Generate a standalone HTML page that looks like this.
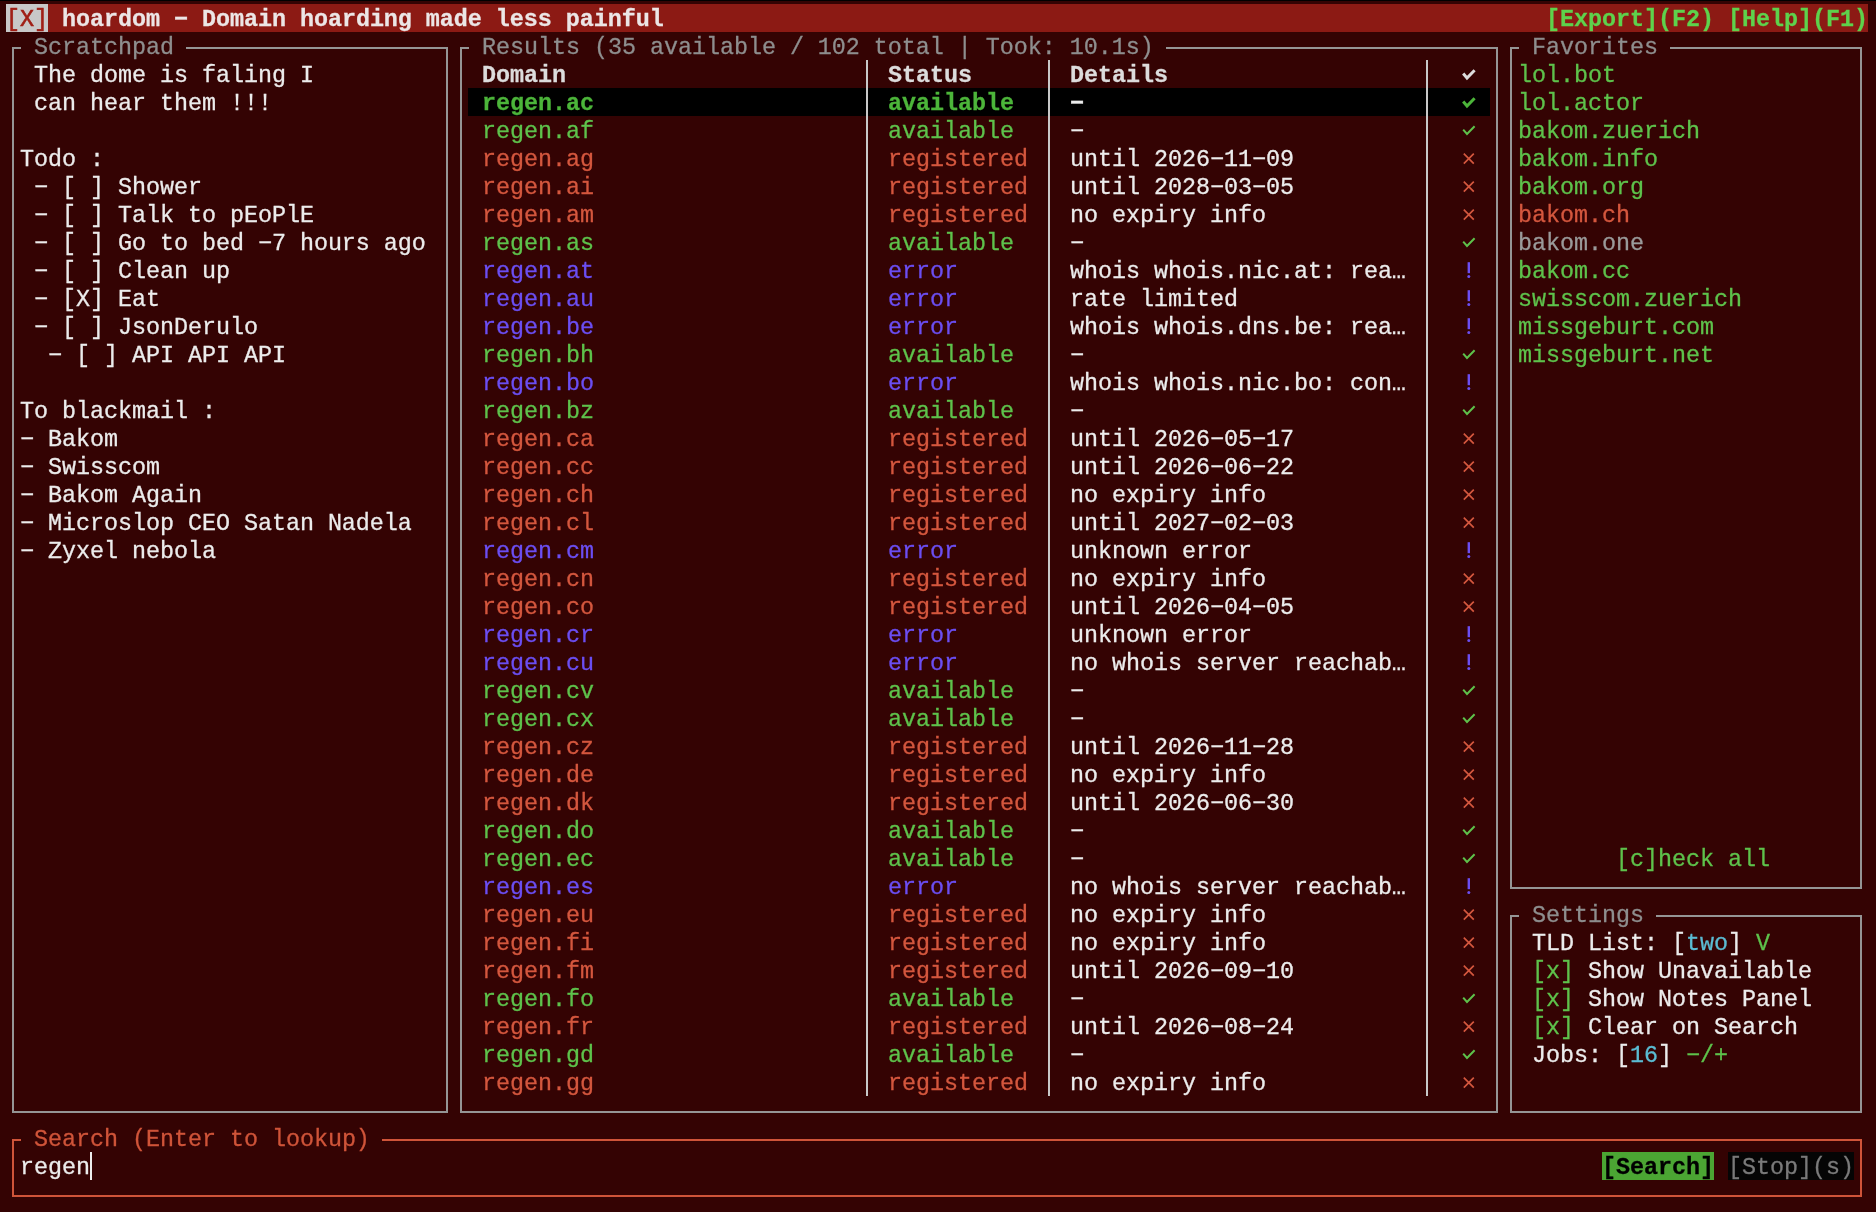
<!DOCTYPE html><html><head><meta charset="utf-8"><style>
html,body{margin:0;padding:0;}
body{width:1876px;height:1212px;overflow:hidden;background:#340303;position:relative;font-family:"Liberation Mono",monospace;}
.r{position:absolute;}
.t{position:absolute;white-space:pre;-webkit-text-stroke:0.28px currentColor;font-size:23.4px;line-height:28px;letter-spacing:-0.0423px;}
.b{font-weight:bold;}
.xs{-webkit-text-stroke:0.6px currentColor;}
svg{position:absolute;left:0;top:0;}
#tx{position:absolute;left:0;top:0;width:1876px;height:1212px;will-change:transform;}

</style></head><body>
<div class="r" style="left:0;top:0;width:1876px;height:1px;background:#000"></div>
<div class="r" style="left:6px;top:4px;width:1862px;height:28px;background:#8c1a14"></div>
<div class="r" style="left:6px;top:4px;width:42px;height:28px;background:#c8c8c8"></div>
<div class="r" style="left:12px;top:47px;width:2px;height:1066px;background:#959595"></div>
<div class="r" style="left:446px;top:47px;width:2px;height:1066px;background:#959595"></div>
<div class="r" style="left:12px;top:1111px;width:436px;height:2px;background:#959595"></div>
<div class="r" style="left:12px;top:47px;width:9px;height:2px;background:#959595"></div>
<div class="r" style="left:186px;top:47px;width:262px;height:2px;background:#959595"></div>
<div class="r" style="left:460px;top:47px;width:2px;height:1066px;background:#959595"></div>
<div class="r" style="left:1496px;top:47px;width:2px;height:1066px;background:#959595"></div>
<div class="r" style="left:460px;top:1111px;width:1038px;height:2px;background:#959595"></div>
<div class="r" style="left:460px;top:47px;width:9px;height:2px;background:#959595"></div>
<div class="r" style="left:1166px;top:47px;width:332px;height:2px;background:#959595"></div>
<div class="r" style="left:1510px;top:47px;width:2px;height:842px;background:#959595"></div>
<div class="r" style="left:1860px;top:47px;width:2px;height:842px;background:#959595"></div>
<div class="r" style="left:1510px;top:887px;width:352px;height:2px;background:#959595"></div>
<div class="r" style="left:1510px;top:47px;width:9px;height:2px;background:#959595"></div>
<div class="r" style="left:1670px;top:47px;width:192px;height:2px;background:#959595"></div>
<div class="r" style="left:1510px;top:915px;width:2px;height:198px;background:#959595"></div>
<div class="r" style="left:1860px;top:915px;width:2px;height:198px;background:#959595"></div>
<div class="r" style="left:1510px;top:1111px;width:352px;height:2px;background:#959595"></div>
<div class="r" style="left:1510px;top:915px;width:9px;height:2px;background:#959595"></div>
<div class="r" style="left:1656px;top:915px;width:206px;height:2px;background:#959595"></div>
<div class="r" style="left:12px;top:1139px;width:2px;height:58px;background:#cf5439"></div>
<div class="r" style="left:1860px;top:1139px;width:2px;height:58px;background:#cf5439"></div>
<div class="r" style="left:12px;top:1195px;width:1850px;height:2px;background:#cf5439"></div>
<div class="r" style="left:12px;top:1139px;width:9px;height:2px;background:#cf5439"></div>
<div class="r" style="left:382px;top:1139px;width:1480px;height:2px;background:#cf5439"></div>
<div class="r" style="left:468px;top:88px;width:1022px;height:28px;background:#000000"></div>
<div class="r" style="left:866px;top:60px;width:2px;height:1036px;background:#c8c8c8"></div>
<div class="r" style="left:1048px;top:60px;width:2px;height:1036px;background:#c8c8c8"></div>
<div class="r" style="left:1426px;top:60px;width:2px;height:1036px;background:#c8c8c8"></div>
<div class="r" style="left:90px;top:1152px;width:2px;height:28px;background:#ececec"></div>
<div class="r" style="left:1602px;top:1152px;width:112px;height:28px;background:#4ba533"></div>
<div class="r" style="left:1728px;top:1152px;width:126px;height:28px;background:#050505"></div>
<div id="tx">
<div class="r" style="left:6px;top:4px;height:28px;width:46px;overflow:hidden"><div class="t xs" style="left:0;top:1.50px;color:#a01f16">[X]</div></div>
<div class="r" style="left:62px;top:4px;height:28px;width:606px;overflow:hidden"><div class="t b" style="left:0;top:1.50px;color:#ece6e6">hoardom − Domain hoarding made less painful</div></div>
<div class="r" style="left:1546px;top:4px;height:28px;width:326px;overflow:hidden"><div class="t b" style="left:0;top:1.50px;color:#5ed24c">[Export](F2) [Help](F1)</div></div>
<div class="t" style="left:34px;top:33.50px;color:#8e8e8e">Scratchpad</div>
<div class="t" style="left:482px;top:33.50px;color:#8e8e8e">Results (35 available / 102 total | Took: 10.1s)</div>
<div class="t" style="left:1532px;top:33.50px;color:#8e8e8e">Favorites</div>
<div class="t" style="left:1532px;top:901.50px;color:#8e8e8e">Settings</div>
<div class="t" style="left:34px;top:1125.50px;color:#cf5439">Search (Enter to lookup)</div>
<div class="t" style="left:20px;top:61.50px;color:#ececec"> The dome is faling I</div>
<div class="t" style="left:20px;top:89.50px;color:#ececec"> can hear them !!!</div>
<div class="t" style="left:20px;top:145.50px;color:#ececec">Todo :</div>
<div class="t" style="left:20px;top:173.50px;color:#ececec"> − [ ] Shower</div>
<div class="t" style="left:20px;top:201.50px;color:#ececec"> − [ ] Talk to pEoPlE</div>
<div class="t" style="left:20px;top:229.50px;color:#ececec"> − [ ] Go to bed −7 hours ago</div>
<div class="t" style="left:20px;top:257.50px;color:#ececec"> − [ ] Clean up</div>
<div class="t" style="left:20px;top:285.50px;color:#ececec"> − [X] Eat</div>
<div class="t" style="left:20px;top:313.50px;color:#ececec"> − [ ] JsonDerulo</div>
<div class="t" style="left:20px;top:341.50px;color:#ececec">  − [ ] API API API</div>
<div class="t" style="left:20px;top:397.50px;color:#ececec">To blackmail :</div>
<div class="t" style="left:20px;top:425.50px;color:#ececec">− Bakom</div>
<div class="t" style="left:20px;top:453.50px;color:#ececec">− Swisscom</div>
<div class="t" style="left:20px;top:481.50px;color:#ececec">− Bakom Again</div>
<div class="t" style="left:20px;top:509.50px;color:#ececec">− Microslop CEO Satan Nadela</div>
<div class="t" style="left:20px;top:537.50px;color:#ececec">− Zyxel nebola</div>
<div class="t b" style="left:482px;top:61.50px;color:#dcdcdc">Domain</div>
<div class="t b" style="left:888px;top:61.50px;color:#dcdcdc">Status</div>
<div class="t b" style="left:1070px;top:61.50px;color:#dcdcdc">Details</div>
<div class="t b" style="left:482px;top:89.50px;color:#4cb53a">regen.ac</div>
<div class="t b" style="left:888px;top:89.50px;color:#4cb53a">available</div>
<div class="t b" style="left:1070px;top:89.50px;color:#ececec">−</div>
<div class="t" style="left:482px;top:117.50px;color:#5ec24b">regen.af</div>
<div class="t" style="left:888px;top:117.50px;color:#5ec24b">available</div>
<div class="t" style="left:1070px;top:117.50px;color:#ececec">−</div>
<div class="t" style="left:482px;top:145.50px;color:#d4573e">regen.ag</div>
<div class="t" style="left:888px;top:145.50px;color:#d4573e">registered</div>
<div class="t" style="left:1070px;top:145.50px;color:#ececec">until 2026−11−09</div>
<div class="t" style="left:482px;top:173.50px;color:#d4573e">regen.ai</div>
<div class="t" style="left:888px;top:173.50px;color:#d4573e">registered</div>
<div class="t" style="left:1070px;top:173.50px;color:#ececec">until 2028−03−05</div>
<div class="t" style="left:482px;top:201.50px;color:#d4573e">regen.am</div>
<div class="t" style="left:888px;top:201.50px;color:#d4573e">registered</div>
<div class="t" style="left:1070px;top:201.50px;color:#ececec">no expiry info</div>
<div class="t" style="left:482px;top:229.50px;color:#5ec24b">regen.as</div>
<div class="t" style="left:888px;top:229.50px;color:#5ec24b">available</div>
<div class="t" style="left:1070px;top:229.50px;color:#ececec">−</div>
<div class="t" style="left:482px;top:257.50px;color:#6b4ef2">regen.at</div>
<div class="t" style="left:888px;top:257.50px;color:#6b4ef2">error</div>
<div class="t" style="left:1070px;top:257.50px;color:#ececec">whois whois.nic.at: rea…</div>
<div class="t" style="left:482px;top:285.50px;color:#6b4ef2">regen.au</div>
<div class="t" style="left:888px;top:285.50px;color:#6b4ef2">error</div>
<div class="t" style="left:1070px;top:285.50px;color:#ececec">rate limited</div>
<div class="t" style="left:482px;top:313.50px;color:#6b4ef2">regen.be</div>
<div class="t" style="left:888px;top:313.50px;color:#6b4ef2">error</div>
<div class="t" style="left:1070px;top:313.50px;color:#ececec">whois whois.dns.be: rea…</div>
<div class="t" style="left:482px;top:341.50px;color:#5ec24b">regen.bh</div>
<div class="t" style="left:888px;top:341.50px;color:#5ec24b">available</div>
<div class="t" style="left:1070px;top:341.50px;color:#ececec">−</div>
<div class="t" style="left:482px;top:369.50px;color:#6b4ef2">regen.bo</div>
<div class="t" style="left:888px;top:369.50px;color:#6b4ef2">error</div>
<div class="t" style="left:1070px;top:369.50px;color:#ececec">whois whois.nic.bo: con…</div>
<div class="t" style="left:482px;top:397.50px;color:#5ec24b">regen.bz</div>
<div class="t" style="left:888px;top:397.50px;color:#5ec24b">available</div>
<div class="t" style="left:1070px;top:397.50px;color:#ececec">−</div>
<div class="t" style="left:482px;top:425.50px;color:#d4573e">regen.ca</div>
<div class="t" style="left:888px;top:425.50px;color:#d4573e">registered</div>
<div class="t" style="left:1070px;top:425.50px;color:#ececec">until 2026−05−17</div>
<div class="t" style="left:482px;top:453.50px;color:#d4573e">regen.cc</div>
<div class="t" style="left:888px;top:453.50px;color:#d4573e">registered</div>
<div class="t" style="left:1070px;top:453.50px;color:#ececec">until 2026−06−22</div>
<div class="t" style="left:482px;top:481.50px;color:#d4573e">regen.ch</div>
<div class="t" style="left:888px;top:481.50px;color:#d4573e">registered</div>
<div class="t" style="left:1070px;top:481.50px;color:#ececec">no expiry info</div>
<div class="t" style="left:482px;top:509.50px;color:#d4573e">regen.cl</div>
<div class="t" style="left:888px;top:509.50px;color:#d4573e">registered</div>
<div class="t" style="left:1070px;top:509.50px;color:#ececec">until 2027−02−03</div>
<div class="t" style="left:482px;top:537.50px;color:#6b4ef2">regen.cm</div>
<div class="t" style="left:888px;top:537.50px;color:#6b4ef2">error</div>
<div class="t" style="left:1070px;top:537.50px;color:#ececec">unknown error</div>
<div class="t" style="left:482px;top:565.50px;color:#d4573e">regen.cn</div>
<div class="t" style="left:888px;top:565.50px;color:#d4573e">registered</div>
<div class="t" style="left:1070px;top:565.50px;color:#ececec">no expiry info</div>
<div class="t" style="left:482px;top:593.50px;color:#d4573e">regen.co</div>
<div class="t" style="left:888px;top:593.50px;color:#d4573e">registered</div>
<div class="t" style="left:1070px;top:593.50px;color:#ececec">until 2026−04−05</div>
<div class="t" style="left:482px;top:621.50px;color:#6b4ef2">regen.cr</div>
<div class="t" style="left:888px;top:621.50px;color:#6b4ef2">error</div>
<div class="t" style="left:1070px;top:621.50px;color:#ececec">unknown error</div>
<div class="t" style="left:482px;top:649.50px;color:#6b4ef2">regen.cu</div>
<div class="t" style="left:888px;top:649.50px;color:#6b4ef2">error</div>
<div class="t" style="left:1070px;top:649.50px;color:#ececec">no whois server reachab…</div>
<div class="t" style="left:482px;top:677.50px;color:#5ec24b">regen.cv</div>
<div class="t" style="left:888px;top:677.50px;color:#5ec24b">available</div>
<div class="t" style="left:1070px;top:677.50px;color:#ececec">−</div>
<div class="t" style="left:482px;top:705.50px;color:#5ec24b">regen.cx</div>
<div class="t" style="left:888px;top:705.50px;color:#5ec24b">available</div>
<div class="t" style="left:1070px;top:705.50px;color:#ececec">−</div>
<div class="t" style="left:482px;top:733.50px;color:#d4573e">regen.cz</div>
<div class="t" style="left:888px;top:733.50px;color:#d4573e">registered</div>
<div class="t" style="left:1070px;top:733.50px;color:#ececec">until 2026−11−28</div>
<div class="t" style="left:482px;top:761.50px;color:#d4573e">regen.de</div>
<div class="t" style="left:888px;top:761.50px;color:#d4573e">registered</div>
<div class="t" style="left:1070px;top:761.50px;color:#ececec">no expiry info</div>
<div class="t" style="left:482px;top:789.50px;color:#d4573e">regen.dk</div>
<div class="t" style="left:888px;top:789.50px;color:#d4573e">registered</div>
<div class="t" style="left:1070px;top:789.50px;color:#ececec">until 2026−06−30</div>
<div class="t" style="left:482px;top:817.50px;color:#5ec24b">regen.do</div>
<div class="t" style="left:888px;top:817.50px;color:#5ec24b">available</div>
<div class="t" style="left:1070px;top:817.50px;color:#ececec">−</div>
<div class="t" style="left:482px;top:845.50px;color:#5ec24b">regen.ec</div>
<div class="t" style="left:888px;top:845.50px;color:#5ec24b">available</div>
<div class="t" style="left:1070px;top:845.50px;color:#ececec">−</div>
<div class="t" style="left:482px;top:873.50px;color:#6b4ef2">regen.es</div>
<div class="t" style="left:888px;top:873.50px;color:#6b4ef2">error</div>
<div class="t" style="left:1070px;top:873.50px;color:#ececec">no whois server reachab…</div>
<div class="t" style="left:482px;top:901.50px;color:#d4573e">regen.eu</div>
<div class="t" style="left:888px;top:901.50px;color:#d4573e">registered</div>
<div class="t" style="left:1070px;top:901.50px;color:#ececec">no expiry info</div>
<div class="t" style="left:482px;top:929.50px;color:#d4573e">regen.fi</div>
<div class="t" style="left:888px;top:929.50px;color:#d4573e">registered</div>
<div class="t" style="left:1070px;top:929.50px;color:#ececec">no expiry info</div>
<div class="t" style="left:482px;top:957.50px;color:#d4573e">regen.fm</div>
<div class="t" style="left:888px;top:957.50px;color:#d4573e">registered</div>
<div class="t" style="left:1070px;top:957.50px;color:#ececec">until 2026−09−10</div>
<div class="t" style="left:482px;top:985.50px;color:#5ec24b">regen.fo</div>
<div class="t" style="left:888px;top:985.50px;color:#5ec24b">available</div>
<div class="t" style="left:1070px;top:985.50px;color:#ececec">−</div>
<div class="t" style="left:482px;top:1013.50px;color:#d4573e">regen.fr</div>
<div class="t" style="left:888px;top:1013.50px;color:#d4573e">registered</div>
<div class="t" style="left:1070px;top:1013.50px;color:#ececec">until 2026−08−24</div>
<div class="t" style="left:482px;top:1041.50px;color:#5ec24b">regen.gd</div>
<div class="t" style="left:888px;top:1041.50px;color:#5ec24b">available</div>
<div class="t" style="left:1070px;top:1041.50px;color:#ececec">−</div>
<div class="t" style="left:482px;top:1069.50px;color:#d4573e">regen.gg</div>
<div class="t" style="left:888px;top:1069.50px;color:#d4573e">registered</div>
<div class="t" style="left:1070px;top:1069.50px;color:#ececec">no expiry info</div>
<div class="t" style="left:1518px;top:61.50px;color:#5ec24b">lol.bot</div>
<div class="t" style="left:1518px;top:89.50px;color:#5ec24b">lol.actor</div>
<div class="t" style="left:1518px;top:117.50px;color:#5ec24b">bakom.zuerich</div>
<div class="t" style="left:1518px;top:145.50px;color:#5ec24b">bakom.info</div>
<div class="t" style="left:1518px;top:173.50px;color:#5ec24b">bakom.org</div>
<div class="t" style="left:1518px;top:201.50px;color:#d4573e">bakom.ch</div>
<div class="t" style="left:1518px;top:229.50px;color:#9a9a9a">bakom.one</div>
<div class="t" style="left:1518px;top:257.50px;color:#5ec24b">bakom.cc</div>
<div class="t" style="left:1518px;top:285.50px;color:#5ec24b">swisscom.zuerich</div>
<div class="t" style="left:1518px;top:313.50px;color:#5ec24b">missgeburt.com</div>
<div class="t" style="left:1518px;top:341.50px;color:#5ec24b">missgeburt.net</div>
<div class="t" style="left:1616px;top:845.50px;color:#5ec24b">[c]heck all</div>
<div class="t" style="left:1532px;top:929.50px;color:#ececec">TLD List: [</div>
<div class="t" style="left:1686px;top:929.50px;color:#5bbcd3">two</div>
<div class="t" style="left:1728px;top:929.50px;color:#ececec">]</div>
<div class="t" style="left:1756px;top:929.50px;color:#5ec24b">V</div>
<div class="t" style="left:1532px;top:957.50px;color:#5ec24b">[x]</div>
<div class="t" style="left:1588px;top:957.50px;color:#ececec">Show Unavailable</div>
<div class="t" style="left:1532px;top:985.50px;color:#5ec24b">[x]</div>
<div class="t" style="left:1588px;top:985.50px;color:#ececec">Show Notes Panel</div>
<div class="t" style="left:1532px;top:1013.50px;color:#5ec24b">[x]</div>
<div class="t" style="left:1588px;top:1013.50px;color:#ececec">Clear on Search</div>
<div class="t" style="left:1532px;top:1041.50px;color:#ececec">Jobs: [</div>
<div class="t" style="left:1630px;top:1041.50px;color:#5bbcd3">16</div>
<div class="t" style="left:1658px;top:1041.50px;color:#ececec">]</div>
<div class="t" style="left:1686px;top:1041.50px;color:#5ec24b">−/+</div>
<div class="t" style="left:20px;top:1153.50px;color:#ececec">regen</div>
<div class="t b" style="left:1602px;top:1153.50px;color:#000000">[Search]</div>
<div class="t" style="left:1728px;top:1153.50px;color:#7a7a7a">[Stop](s)</div>
<svg width="1876" height="1212" viewBox="0 0 1876 1212"><path d="M1463.2 73.6 L1467 78 L1474.6 70.2" fill="none" stroke="#dcdcdc" stroke-width="3" stroke-linecap="butt" stroke-linejoin="miter"/><path d="M1463.2 101.6 L1467 106 L1474.6 98.2" fill="none" stroke="#4cb53a" stroke-width="3" stroke-linecap="butt" stroke-linejoin="miter"/><path d="M1463.2 129.6 L1467 134 L1474.6 126.2" fill="none" stroke="#5ec24b" stroke-width="2" stroke-linecap="butt" stroke-linejoin="miter"/><path d="M1463.8 153.6 L1473.8 163.6 M1473.8 153.6 L1463.8 163.6" fill="none" stroke="#d4573e" stroke-width="1.7"/><path d="M1463.8 181.6 L1473.8 191.6 M1473.8 181.6 L1463.8 191.6" fill="none" stroke="#d4573e" stroke-width="1.7"/><path d="M1463.8 209.6 L1473.8 219.6 M1473.8 209.6 L1463.8 219.6" fill="none" stroke="#d4573e" stroke-width="1.7"/><path d="M1463.2 241.6 L1467 246 L1474.6 238.2" fill="none" stroke="#5ec24b" stroke-width="2" stroke-linecap="butt" stroke-linejoin="miter"/><rect x="1467.6" y="262.2" width="2.4" height="11" fill="#6b4ef2"/><circle cx="1468.8" cy="276.6" r="1.5" fill="#6b4ef2"/><rect x="1467.6" y="290.2" width="2.4" height="11" fill="#6b4ef2"/><circle cx="1468.8" cy="304.6" r="1.5" fill="#6b4ef2"/><rect x="1467.6" y="318.2" width="2.4" height="11" fill="#6b4ef2"/><circle cx="1468.8" cy="332.6" r="1.5" fill="#6b4ef2"/><path d="M1463.2 353.6 L1467 358 L1474.6 350.2" fill="none" stroke="#5ec24b" stroke-width="2" stroke-linecap="butt" stroke-linejoin="miter"/><rect x="1467.6" y="374.2" width="2.4" height="11" fill="#6b4ef2"/><circle cx="1468.8" cy="388.6" r="1.5" fill="#6b4ef2"/><path d="M1463.2 409.6 L1467 414 L1474.6 406.2" fill="none" stroke="#5ec24b" stroke-width="2" stroke-linecap="butt" stroke-linejoin="miter"/><path d="M1463.8 433.6 L1473.8 443.6 M1473.8 433.6 L1463.8 443.6" fill="none" stroke="#d4573e" stroke-width="1.7"/><path d="M1463.8 461.6 L1473.8 471.6 M1473.8 461.6 L1463.8 471.6" fill="none" stroke="#d4573e" stroke-width="1.7"/><path d="M1463.8 489.6 L1473.8 499.6 M1473.8 489.6 L1463.8 499.6" fill="none" stroke="#d4573e" stroke-width="1.7"/><path d="M1463.8 517.6 L1473.8 527.6 M1473.8 517.6 L1463.8 527.6" fill="none" stroke="#d4573e" stroke-width="1.7"/><rect x="1467.6" y="542.2" width="2.4" height="11" fill="#6b4ef2"/><circle cx="1468.8" cy="556.6" r="1.5" fill="#6b4ef2"/><path d="M1463.8 573.6 L1473.8 583.6 M1473.8 573.6 L1463.8 583.6" fill="none" stroke="#d4573e" stroke-width="1.7"/><path d="M1463.8 601.6 L1473.8 611.6 M1473.8 601.6 L1463.8 611.6" fill="none" stroke="#d4573e" stroke-width="1.7"/><rect x="1467.6" y="626.2" width="2.4" height="11" fill="#6b4ef2"/><circle cx="1468.8" cy="640.6" r="1.5" fill="#6b4ef2"/><rect x="1467.6" y="654.2" width="2.4" height="11" fill="#6b4ef2"/><circle cx="1468.8" cy="668.6" r="1.5" fill="#6b4ef2"/><path d="M1463.2 689.6 L1467 694 L1474.6 686.2" fill="none" stroke="#5ec24b" stroke-width="2" stroke-linecap="butt" stroke-linejoin="miter"/><path d="M1463.2 717.6 L1467 722 L1474.6 714.2" fill="none" stroke="#5ec24b" stroke-width="2" stroke-linecap="butt" stroke-linejoin="miter"/><path d="M1463.8 741.6 L1473.8 751.6 M1473.8 741.6 L1463.8 751.6" fill="none" stroke="#d4573e" stroke-width="1.7"/><path d="M1463.8 769.6 L1473.8 779.6 M1473.8 769.6 L1463.8 779.6" fill="none" stroke="#d4573e" stroke-width="1.7"/><path d="M1463.8 797.6 L1473.8 807.6 M1473.8 797.6 L1463.8 807.6" fill="none" stroke="#d4573e" stroke-width="1.7"/><path d="M1463.2 829.6 L1467 834 L1474.6 826.2" fill="none" stroke="#5ec24b" stroke-width="2" stroke-linecap="butt" stroke-linejoin="miter"/><path d="M1463.2 857.6 L1467 862 L1474.6 854.2" fill="none" stroke="#5ec24b" stroke-width="2" stroke-linecap="butt" stroke-linejoin="miter"/><rect x="1467.6" y="878.2" width="2.4" height="11" fill="#6b4ef2"/><circle cx="1468.8" cy="892.6" r="1.5" fill="#6b4ef2"/><path d="M1463.8 909.6 L1473.8 919.6 M1473.8 909.6 L1463.8 919.6" fill="none" stroke="#d4573e" stroke-width="1.7"/><path d="M1463.8 937.6 L1473.8 947.6 M1473.8 937.6 L1463.8 947.6" fill="none" stroke="#d4573e" stroke-width="1.7"/><path d="M1463.8 965.6 L1473.8 975.6 M1473.8 965.6 L1463.8 975.6" fill="none" stroke="#d4573e" stroke-width="1.7"/><path d="M1463.2 997.6 L1467 1002 L1474.6 994.2" fill="none" stroke="#5ec24b" stroke-width="2" stroke-linecap="butt" stroke-linejoin="miter"/><path d="M1463.8 1021.6 L1473.8 1031.6 M1473.8 1021.6 L1463.8 1031.6" fill="none" stroke="#d4573e" stroke-width="1.7"/><path d="M1463.2 1053.6 L1467 1058 L1474.6 1050.2" fill="none" stroke="#5ec24b" stroke-width="2" stroke-linecap="butt" stroke-linejoin="miter"/><path d="M1463.8 1077.6 L1473.8 1087.6 M1473.8 1077.6 L1463.8 1087.6" fill="none" stroke="#d4573e" stroke-width="1.7"/></svg>
</div></body></html>
